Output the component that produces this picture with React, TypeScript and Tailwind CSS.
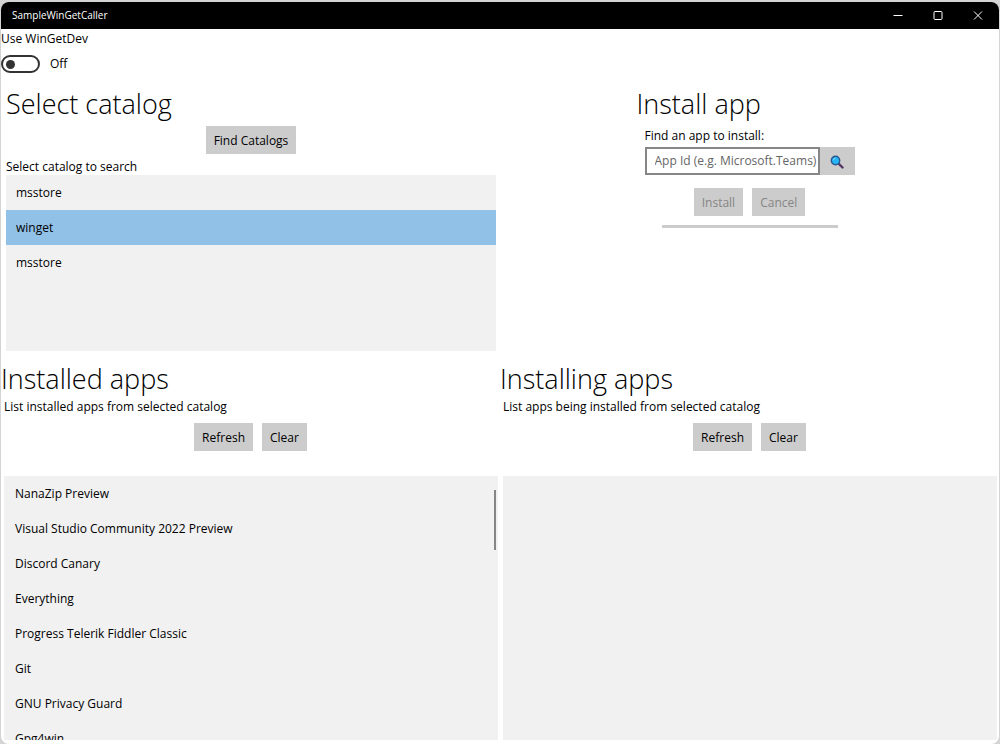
import { useState } from "react";
import type { ReactNode } from "react";

const catalogs = [
  { id: 1, name: "msstore" },
  { id: 2, name: "winget" },
  { id: 3, name: "msstore" },
];

const installedApps = [
  "NanaZip Preview",
  "Visual Studio Community 2022 Preview",
  "Discord Canary",
  "Everything",
  "Progress Telerik Fiddler Classic",
  "Git",
  "GNU Privacy Guard",
  "Gpg4win",
];

function App() {
  const [selectedId, setSelectedId] = useState(2);
  const [useDev, setUseDev] = useState(false);

  return (
    <div className="h-screen bg-[#d4d4d4] px-px pt-0.5 font-['Open_Sans',sans-serif] text-xs text-black">
      <div className="flex h-full flex-col overflow-hidden rounded-lg bg-white">
        <TitleBar />
        <div className="flex h-[53px] shrink-0 flex-col items-start">
          <label htmlFor="use-dev" className="h-5 leading-5">
            Use WinGetDev
          </label>
          <div className="mt-1.5 flex items-center gap-2.5">
            <input
              id="use-dev"
              type="checkbox"
              role="switch"
              checked={useDev}
              onChange={(e) => setUseDev(e.target.checked)}
              className="flex h-[18px] w-[39px] appearance-none items-center rounded-full border-2 border-[#333] px-[3px] before:size-[9px] before:rounded-full before:bg-[#333] checked:justify-end"
            />
            <span className="leading-4">{useDev ? "On" : "Off"}</span>
          </div>
        </div>
        <div className="grid shrink-0 grid-cols-2">
          <section className="pr-1 pl-[5px]">
            <Heading>Select catalog</Heading>
            <div className="flex justify-center">
              <Button>Find Catalogs</Button>
            </div>
            <p className="mt-[5px] leading-4">Select catalog to search</p>
            <ul
              role="listbox"
              aria-label="Select catalog to search"
              className="h-44 bg-[#f1f1f1]"
            >
              {catalogs.map((catalog) => (
                <li key={catalog.id} role="presentation">
                  <button
                    type="button"
                    role="option"
                    aria-selected={catalog.id === selectedId}
                    onClick={() => setSelectedId(catalog.id)}
                    className="h-[35px] w-full px-2.5 text-left aria-selected:bg-[#91c1e7]"
                  >
                    {catalog.name}
                  </button>
                </li>
              ))}
            </ul>
          </section>
          <section className="flex flex-col items-center">
            <div className="w-[226px]">
              <Heading>Install app</Heading>
              <div className="px-2">
                <label htmlFor="app-id" className="block h-5 leading-5">
                  Find an app to install:
                </label>
                <div className="mt-px flex h-7">
                  <input
                    id="app-id"
                    type="text"
                    placeholder="App Id (e.g. Microsoft.Teams)"
                    className="min-w-0 flex-1 border-2 border-[#868686] pl-2 placeholder:text-[#666]"
                  />
                  <button
                    type="button"
                    aria-label="Search"
                    className="flex w-[35px] items-center justify-center bg-[#ccc] pt-0.5"
                  >
                    <SearchIcon />
                  </button>
                </div>
              </div>
              <div className="mt-[13px] flex justify-center gap-[9px]">
                <Button disabled>Install</Button>
                <Button disabled>Cancel</Button>
              </div>
              <div
                role="progressbar"
                aria-label="Install progress"
                aria-valuenow={0}
                className="mx-auto mt-[9px] h-[3px] w-44 bg-[#ccc]"
              />
            </div>
          </section>
        </div>
        <div className="mt-1.5 grid min-h-0 flex-1 grid-cols-2 grid-rows-1 pb-1">
          <AppsPanel
            title="Installed apps"
            caption="List installed apps from selected catalog"
            apps={installedApps}
          />
          <AppsPanel
            title="Installing apps"
            caption="List apps being installed from selected catalog"
            apps={[]}
          />
        </div>
      </div>
    </div>
  );
}

function TitleBar() {
  return (
    <header className="flex h-[27px] shrink-0 items-center justify-between bg-black pr-px pl-[11px] text-[10px] text-white">
      <h1>SampleWinGetCaller</h1>
      <div className="flex h-full">
        <WindowButton label="Minimize">
          <path d="M0.5 4.5h9" />
        </WindowButton>
        <WindowButton label="Maximize">
          <rect x="1" y="0.5" width="8" height="8" rx="1" />
        </WindowButton>
        <WindowButton label="Close">
          <path d="M1 0.5l8 8M9 0.5l-8 8" />
        </WindowButton>
      </div>
    </header>
  );
}

function WindowButton({
  label,
  children,
}: {
  label: string;
  children: ReactNode;
}) {
  return (
    <button
      type="button"
      aria-label={label}
      className="flex w-10 items-center justify-center"
    >
      <svg
        viewBox="0 0 10 10"
        className="size-2.5"
        fill="none"
        stroke="currentColor"
      >
        {children}
      </svg>
    </button>
  );
}

function Heading({ children }: { children: ReactNode }) {
  return (
    <h2 className="h-11 text-[27px] leading-[44px] font-light whitespace-nowrap">
      {children}
    </h2>
  );
}

function Button({
  disabled,
  children,
}: {
  disabled?: boolean;
  children: ReactNode;
}) {
  return (
    <button
      type="button"
      disabled={disabled}
      className="h-7 bg-[#ccc] px-2 pt-0.5 whitespace-nowrap disabled:text-[#858585]"
    >
      {children}
    </button>
  );
}

function AppsPanel({
  title,
  caption,
  apps,
}: {
  title: string;
  caption: string;
  apps: string[];
}) {
  return (
    <section className="flex min-h-0 flex-col">
      <Heading>{title}</Heading>
      <p className="-mt-0.5 px-[3px] leading-4">{caption}</p>
      <div className="mt-2 flex justify-center gap-[9px]">
        <Button>Refresh</Button>
        <Button>Clear</Button>
      </div>
      <div className="relative mr-0.5 ml-[3px] mt-[25px] min-h-0 flex-1 bg-[#f1f1f1]">
        <ul className="h-full overflow-hidden">
          {apps.map((app) => (
            <li key={app} className="h-[35px] px-[11px] leading-[35px]">
              {app}
            </li>
          ))}
        </ul>
        {apps.length > 0 && (
          <div className="absolute top-3.5 right-0.5 h-[60px] w-0.5 bg-[#858585]" />
        )}
      </div>
    </section>
  );
}

function SearchIcon() {
  return (
    <svg viewBox="0 0 14 14" className="size-3.5">
      <path
        d="M8.5 8.5l4 4"
        stroke="#533566"
        strokeWidth="2.4"
        strokeLinecap="round"
      />
      <circle
        cx="5.5"
        cy="5.5"
        r="4.2"
        fill="#26b4f5"
        stroke="#28588f"
        strokeWidth="1.4"
      />
      <path d="M3.5 5a2.5 2.5 0 0 1 2-2" stroke="#8adcff" fill="none" />
    </svg>
  );
}

export default App;
